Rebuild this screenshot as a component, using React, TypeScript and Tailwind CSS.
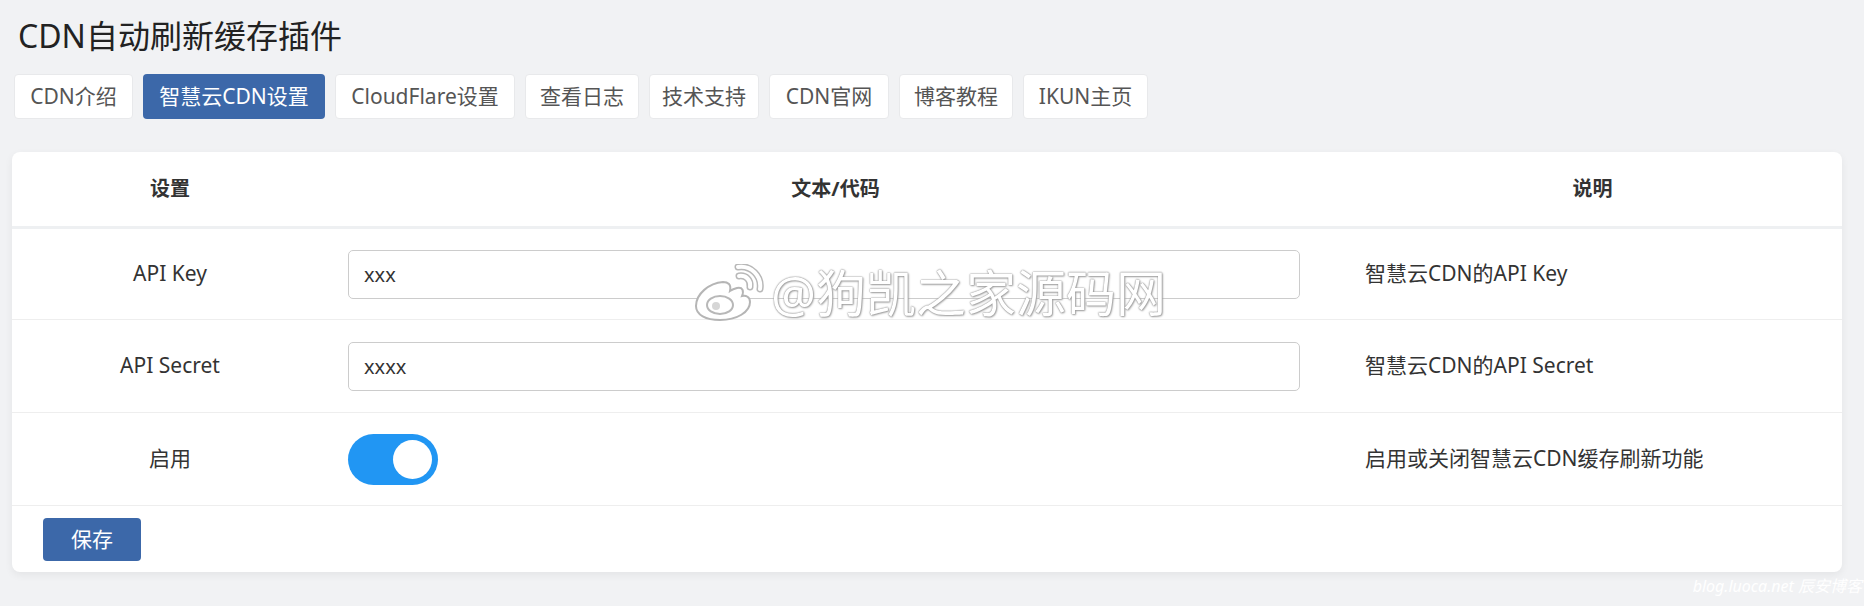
import { useState } from "react";

const tabs = [
  { label: "CDN介绍", w: "w-[119px]" },
  { label: "智慧云CDN设置", w: "w-[182px]" },
  { label: "CloudFlare设置", w: "w-[180px]" },
  { label: "查看日志", w: "w-[114px]" },
  { label: "技术支持", w: "w-[110px]" },
  { label: "CDN官网", w: "w-[120px]" },
  { label: "博客教程", w: "w-[114px]" },
  { label: "IKUN主页", w: "w-[125px]" },
];

const font = "font-['Noto_Sans','Noto_Sans_CJK_SC',sans-serif]";

function WeiboMark() {
  return (
    <svg width="72" height="58" viewBox="0 0 72 58" fill="none">
      <path
        d="M30 18c-14 1-27 12-27 24 0 9 10 14 24 14 17 0 30-8 30-18 0-5-4-7-8-6 2-5 1-9-5-8-4 1-7 3-7 3s1-5-1-7c-2-2-4-2-6-2z"
        fill="#fff"
        stroke="#b5b5b5"
        strokeWidth="2"
      />
      <ellipse cx="27" cy="41" rx="13" ry="9" fill="#fff" stroke="#b8b8b8" strokeWidth="2" />
      <circle cx="23" cy="42" r="4" fill="#d6d6d6" />
      <path d="M46 12c7-1 12 4 11 11" stroke="#b8b8b8" strokeWidth="7" strokeLinecap="round" />
      <path d="M46 12c7-1 12 4 11 11" stroke="#fff" strokeWidth="4" strokeLinecap="round" />
      <path d="M45 3c13-2 24 9 22 22" stroke="#b8b8b8" strokeWidth="7" strokeLinecap="round" />
      <path d="M45 3c13-2 24 9 22 22" stroke="#fff" strokeWidth="4" strokeLinecap="round" />
    </svg>
  );
}

export default function App() {
  const [active] = useState(1);
  const [apiKey, setApiKey] = useState("xxx");
  const [apiSecret, setApiSecret] = useState("xxxx");
  const [enabled, setEnabled] = useState(true);

  return (
    <div className={`relative min-h-screen bg-[#f1f2f4] pl-[12px] pr-[22px] pt-[16px] ${font}`}>
      <h1 className="ml-[6px] text-[32px] leading-[40px] text-[#222]">CDN自动刷新缓存插件</h1>

      <div className="ml-[2px] mt-[18px] flex gap-[10px]">
        {tabs.map((t, i) => (
          <button
            key={t.label}
            className={
              i === active
                ? `h-[45px] ${t.w} rounded-[4px] bg-[#3c68a9] text-[21px] text-white`
                : `h-[45px] ${t.w} rounded-[4px] border border-[#e8e9eb] bg-white text-[21px] text-[#555]`
            }
          >
            {t.label}
          </button>
        ))}
      </div>

      <div className="mt-[33px] overflow-hidden rounded-[8px] bg-white shadow-[0_3px_8px_rgba(0,0,0,0.06)]">
        <div className="grid h-[77px] grid-cols-[316px_1015px_1fr] items-center border-b-[3px] border-[#eef0f2] text-[20px] font-bold text-[#333]">
          <div className="text-center">设置</div>
          <div className="text-center">文本/代码</div>
          <div className="text-center">说明</div>
        </div>

        <div className="grid h-[91px] grid-cols-[316px_1015px_1fr] items-center border-b border-[#eee] text-[21px] text-[#333]">
          <div className="text-center">API Key</div>
          <div className="pl-[20px]">
            <input
              value={apiKey}
              onChange={(e) => setApiKey(e.target.value)}
              className="h-[49px] w-[952px] rounded-[5px] border border-[#ccc] px-[15px] text-[20px] text-[#333] outline-none"
            />
          </div>
          <div className="pl-[22px]">智慧云CDN的API Key</div>
        </div>

        <div className="grid h-[93px] grid-cols-[316px_1015px_1fr] items-center border-b border-[#eee] text-[21px] text-[#333]">
          <div className="text-center">API Secret</div>
          <div className="pl-[20px]">
            <input
              value={apiSecret}
              onChange={(e) => setApiSecret(e.target.value)}
              className="h-[49px] w-[952px] rounded-[5px] border border-[#ccc] px-[15px] text-[20px] text-[#333] outline-none"
            />
          </div>
          <div className="pl-[22px]">智慧云CDN的API Secret</div>
        </div>

        <div className="grid h-[93px] grid-cols-[316px_1015px_1fr] items-center border-b border-[#eee] text-[21px] text-[#333]">
          <div className="text-center">启用</div>
          <div className="pl-[20px]">
            <button
              onClick={() => setEnabled(!enabled)}
              className={
                enabled
                  ? "flex h-[51px] w-[90px] items-center justify-end rounded-full bg-[#2196f3] px-[6px]"
                  : "flex h-[51px] w-[90px] items-center justify-start rounded-full bg-[#ccc] px-[6px]"
              }
            >
              <span className="h-[39px] w-[39px] rounded-full bg-white" />
            </button>
          </div>
          <div className="pl-[22px]">启用或关闭智慧云CDN缓存刷新功能</div>
        </div>

        <div className="px-[31px] pb-[11px] pt-[12px]">
          <button className="h-[43px] w-[98px] rounded-[4px] bg-[#3c68a9] text-[21px] text-white">保存</button>
        </div>
      </div>

      {/* image host watermarks */}
      <div className="pointer-events-none absolute left-[693px] top-[264px] flex items-center gap-[6px]">
        <WeiboMark />
        <span className="text-[50px] leading-none text-white [text-shadow:0_0_1px_#888,0_0_2px_#999,1px_1px_2px_#aaa]">
          @狗凯之家源码网
        </span>
      </div>
      <div className="pointer-events-none absolute right-[2px] top-[578px] text-[16px] italic leading-none text-white">
        blog.luoca.net 辰安博客
      </div>
    </div>
  );
}
